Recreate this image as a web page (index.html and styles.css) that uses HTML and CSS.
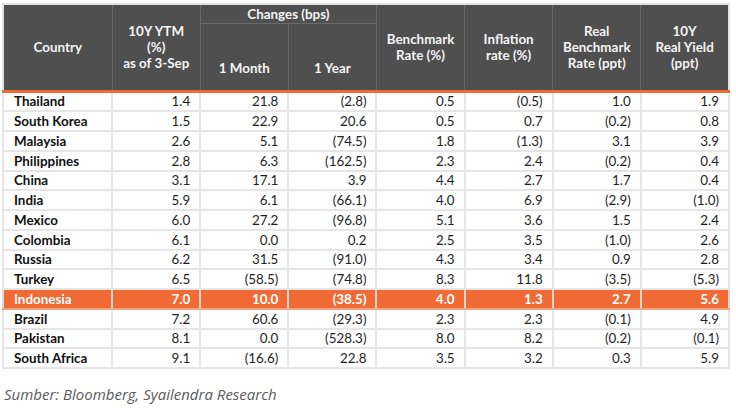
FILE: index.html
```html
<!DOCTYPE html>
<html>
<head>
<meta charset="utf-8">
<link rel="stylesheet" href="styles.css">
</head>
<body>
<div class="wrap">
<table class="yields">
<colgroup>
<col class="c-country"><col class="c-n"><col class="c-n"><col class="c-n"><col class="c-n"><col class="c-n"><col class="c-n"><col class="c-n">
</colgroup>
<thead>
<tr class="h1">
<th rowspan="2" class="main">Country</th>
<th rowspan="2" class="main">10Y YTM<br>(%)<br>as of 3-Sep</th>
<th colspan="2" class="grp">Changes (bps)</th>
<th rowspan="2" class="main">Benchmark<br>Rate (%)</th>
<th rowspan="2" class="main">Inflation<br>rate (%)</th>
<th rowspan="2" class="main">Real<br>Benchmark<br>Rate (ppt)</th>
<th rowspan="2" class="main">10Y<br>Real Yield<br>(ppt)</th>
</tr>
<tr class="h2">
<th class="sub">1 Month</th>
<th class="sub">1 Year</th>
</tr>
</thead>
<tbody>
<tr><td>Thailand</td><td>1.4</td><td>21.8</td><td>(2.8)</td><td>0.5</td><td>(0.5)</td><td>1.0</td><td>1.9</td></tr>
<tr><td>South Korea</td><td>1.5</td><td>22.9</td><td>20.6</td><td>0.5</td><td>0.7</td><td>(0.2)</td><td>0.8</td></tr>
<tr><td>Malaysia</td><td>2.6</td><td>5.1</td><td>(74.5)</td><td>1.8</td><td>(1.3)</td><td>3.1</td><td>3.9</td></tr>
<tr><td>Philippines</td><td>2.8</td><td>6.3</td><td>(162.5)</td><td>2.3</td><td>2.4</td><td>(0.2)</td><td>0.4</td></tr>
<tr><td>China</td><td>3.1</td><td>17.1</td><td>3.9</td><td>4.4</td><td>2.7</td><td>1.7</td><td>0.4</td></tr>
<tr><td>India</td><td>5.9</td><td>6.1</td><td>(66.1)</td><td>4.0</td><td>6.9</td><td>(2.9)</td><td>(1.0)</td></tr>
<tr><td>Mexico</td><td>6.0</td><td>27.2</td><td>(96.8)</td><td>5.1</td><td>3.6</td><td>1.5</td><td>2.4</td></tr>
<tr><td>Colombia</td><td>6.1</td><td>0.0</td><td>0.2</td><td>2.5</td><td>3.5</td><td>(1.0)</td><td>2.6</td></tr>
<tr><td>Russia</td><td>6.2</td><td>31.5</td><td>(91.0)</td><td>4.3</td><td>3.4</td><td>0.9</td><td>2.8</td></tr>
<tr><td>Turkey</td><td>6.5</td><td>(58.5)</td><td>(74.8)</td><td>8.3</td><td>11.8</td><td>(3.5)</td><td>(5.3)</td></tr>
<tr class="hl"><td>Indonesia</td><td>7.0</td><td>10.0</td><td>(38.5)</td><td>4.0</td><td>1.3</td><td>2.7</td><td>5.6</td></tr>
<tr><td>Brazil</td><td>7.2</td><td>60.6</td><td>(29.3)</td><td>2.3</td><td>2.3</td><td>(0.1)</td><td>4.9</td></tr>
<tr><td>Pakistan</td><td>8.1</td><td>0.0</td><td>(528.3)</td><td>8.0</td><td>8.2</td><td>(0.2)</td><td>(0.1)</td></tr>
<tr><td>South Africa</td><td>9.1</td><td>(16.6)</td><td>22.8</td><td>3.5</td><td>3.2</td><td>0.3</td><td>5.9</td></tr>
</tbody>
</table>
<p class="source">Sumber: Bloomberg, Syailendra Research</p>
</div>
</body>
</html>
```
FILE: styles.css
```css
html, body {
  margin: 0;
  padding: 0;
  background: #ffffff;
}
.wrap {
  padding: 3px 0 0 2px;
}
.yields {
  border-collapse: collapse;
  table-layout: fixed;
  width: 728px;
  font-family: Lato, "Liberation Sans", sans-serif;
  font-size: 13.4px;
  color: #1e1e1e;
  border: 2px solid #e2e2e2;
}
.c-country { width: 109px; }
.c-n { width: 88px; }
.yields th {
  background: #4f4f4f;
  color: #f4f4f4;
  font-weight: 700;
  line-height: 16px;
  padding: 0;
  border: 1px solid #6a6a6a;
  border-top: none;
  text-align: center;
  vertical-align: middle;
}
.yields th.main,
.yields th.sub {
  border-bottom: 3px solid #ef6a35;
}
.yields .h1 { height: 19px; }
.yields .h2 { height: 68px; }
.yields th.sub {
  vertical-align: bottom;
  padding-bottom: 14px;
}
.yields td {
  height: 17.75px;
  padding: 0 9px 0 10px;
  border: 2px solid #e6e6e6;
  text-align: right;
  line-height: 16px;
  white-space: nowrap;
}
.yields td:first-child {
  text-align: left;
  font-weight: 700;
  color: #111;
}
.yields tr.hl td {
  background: #ef6a35;
  color: #ffffff;
  font-weight: 700;
  border-color: #f0a27f #e8d5cc;
}
.source {
  margin: 15px 0 0 2px;
  font-family: "Open Sans", "Liberation Sans", sans-serif;
  font-style: italic;
  font-size: 15px;
  line-height: 20px;
  color: #5a5a5a;
}
```
